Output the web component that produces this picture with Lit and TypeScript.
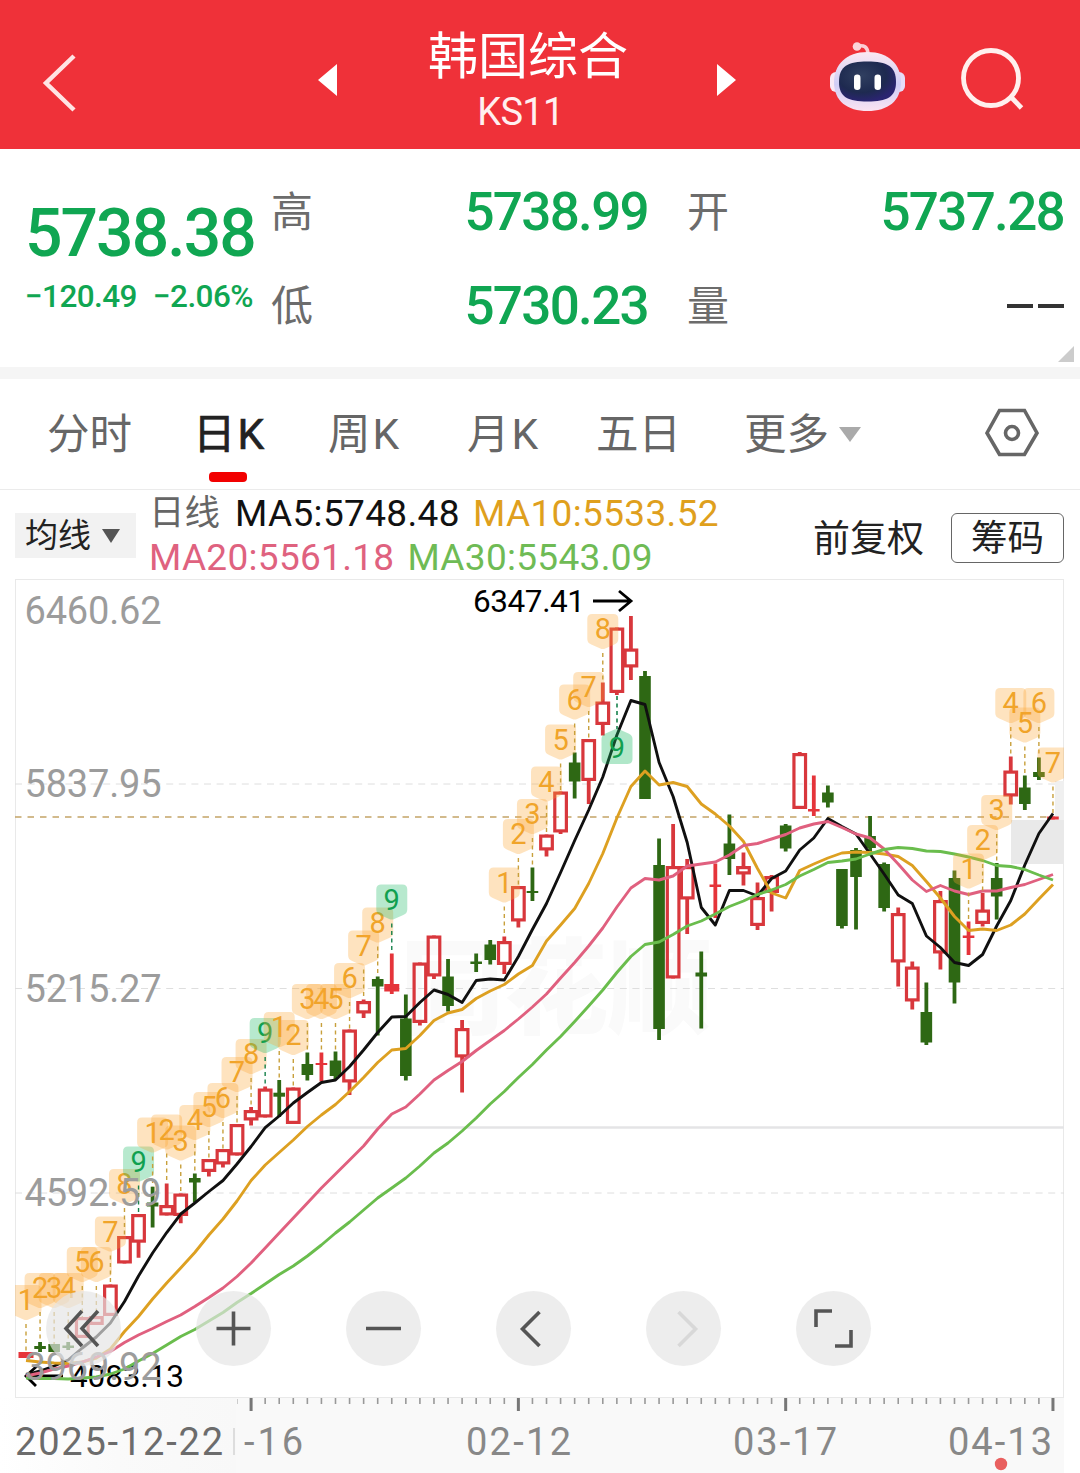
import { LitElement, html, svg, css } from "lit";
import { customElement } from "lit/decorators.js";

type Kind = "r" | "g" | "f";
type Candle = [Kind, number, number, number, number];

// kind (r hollow red, g solid green, f solid red), wick top, body top, body bottom, wick bottom
const CANDLES: Candle[] = [
  ["f", 1352, 1352, 1358, 1358], ["g", 1342, 1346, 1349, 1352], ["g", 1344, 1344, 1352, 1352], ["g", 1342, 1345.5, 1348, 1350],
  ["r", 1317, 1317, 1338, 1338], ["r", 1316, 1316, 1325, 1325], ["r", 1284.5, 1284.5, 1316, 1316], ["r", 1236, 1236, 1263.5, 1263.5],
  ["r", 1214, 1214, 1242.7, 1257.7], ["g", 1186.7, 1202.5, 1206.5, 1227.5], ["r", 1183.5, 1205, 1215.5, 1215.5], ["r", 1193.5, 1193.5, 1216, 1223.3],
  ["g", 1173.5, 1178, 1182.5, 1202], ["r", 1159, 1159, 1172, 1176.5], ["r", 1149, 1149, 1164.5, 1167.5], ["r", 1124, 1124, 1155.5, 1155.5],
  ["r", 1107, 1110, 1120.5, 1125.5], ["r", 1086.5, 1088.5, 1117.5, 1117.5], ["g", 1080, 1092.7, 1096.7, 1117], ["r", 1087.5, 1087.5, 1124, 1124],
  ["g", 1052.5, 1064, 1075, 1080.5], ["f", 1052.5, 1063, 1065, 1081.5], ["g", 1051.5, 1060.5, 1076, 1079], ["r", 1029.5, 1029.5, 1082.5, 1095],
  ["r", 999.5, 1001, 1013.5, 1018], ["g", 976.5, 979, 986.5, 1035.5], ["f", 953.5, 984, 991.5, 994], ["g", 994.5, 1018.5, 1076, 1080.5],
  ["r", 962.5, 962.5, 1023, 1025.5], ["r", 935.5, 935.5, 976.5, 979], ["g", 959, 976.5, 1006, 1011.5], ["r", 1020, 1028, 1057.5, 1092.5],
  ["g", 953.5, 961.5, 964, 972], ["g", 940, 944.5, 960, 964.5], ["r", 936.5, 941, 965, 974], ["r", 886, 886, 921.5, 927.5],
  ["g", 867.5, 891, 893, 901], ["r", 834.5, 834.5, 850.5, 856.5], ["r", 791.5, 791.5, 832.5, 834], ["g", 752.5, 762.5, 781.5, 798.5],
  ["r", 739, 739, 781, 804], ["r", 682.5, 701.5, 725, 735.5], ["r", 627.5, 627.5, 693, 695], ["r", 616, 648.5, 667.5, 680],
  ["g", 671, 676, 799, 799], ["g", 838.5, 865, 1029, 1040], ["r", 824, 866, 978.5, 978.5], ["r", 859, 866, 899.5, 934],
  ["g", 951.5, 972.5, 976.5, 1028.5], ["f", 863.5, 884.5, 887, 918], ["g", 814.5, 843.5, 859, 875], ["r", 852.5, 866, 874.5, 885.5],
  ["r", 882.5, 897, 926, 930], ["r", 875, 876, 893, 911.5], ["g", 824, 825.5, 848.5, 851.5], ["r", 752, 753, 809, 809],
  ["f", 775.5, 809, 811.5, 816], ["g", 785.5, 792.5, 802.5, 807.5], ["g", 869, 869, 926, 928.5], ["g", 848, 850, 877, 929.5],
  ["g", 816, 836, 848, 852], ["g", 862.5, 864, 908, 911.5], ["r", 907.5, 913, 962.5, 986.5], ["r", 961.5, 966.5, 1001.5, 1009.5],
  ["g", 982.5, 1012, 1042.5, 1045], ["r", 891, 900, 953.5, 969.5], ["g", 870.5, 878, 982.5, 1003.5], ["f", 921.5, 935.5, 938, 955],
  ["r", 893, 909.5, 924, 926.5], ["g", 863, 878, 896.5, 919.5], ["r", 756.5, 770.5, 796.5, 804.5], ["g", 775.5, 787.5, 804, 810],
  ["g", 757.5, 772, 777, 780], ["f", 816.5, 816.5, 819.5, 819.5],
];

// candle index, count, top edge of the tag
const TAGS: [number, number, number][] = [
  [0, 1, 1285], [1, 2, 1273], [2, 3, 1273], [3, 4, 1273], [4, 5, 1247], [5, 6, 1247], [6, 7, 1216.5], [7, 8, 1169], [8, 9, 1146.5],
  [9, 1, 1117.5], [10, 2, 1114.5], [11, 3, 1125.5], [12, 4, 1105], [13, 5, 1092], [14, 6, 1083], [15, 7, 1057], [16, 8, 1039], [17, 9, 1018],
  [18, 1, 1012], [19, 2, 1020], [20, 3, 984], [21, 4, 984], [22, 5, 984], [23, 6, 963], [24, 7, 930.5], [25, 8, 907.5], [26, 9, 884.5],
  [34, 1, 867.5], [35, 2, 819], [36, 3, 799], [37, 4, 766.5], [38, 5, 724.5], [39, 6, 684.5], [40, 7, 672], [41, 8, 614],
  [67, 1, 853.5], [68, 2, 825], [69, 3, 795], [70, 4, 688], [71, 5, 707.5], [72, 6, 688], [73, 7, 747.5],
];

const MA5 = [1375, 1371, 1366, 1360, 1348, 1337, 1323, 1301.5, 1276, 1253, 1232.5, 1214, 1203, 1191.5, 1180.5, 1164, 1146.5, 1127.7, 1116, 1103, 1092.5, 1082.5, 1080, 1066.5, 1050, 1032.5, 1017, 1016.5, 1002.5, 990, 994.5, 1002.5, 980.5, 979, 980, 956.5, 929.5, 903.5, 872.5, 840.5, 810, 777, 735, 700.5, 704.5, 762.5, 796.5, 842.5, 907.5, 925, 890.5, 890.5, 896, 878.5, 871, 850, 838, 818.5, 826.5, 834, 854, 874, 895, 903.5, 936, 947.5, 962.5, 965.5, 954.5, 926, 900.5, 865, 833.5, 813.5];
const MA10 = [1360.5, 1362, 1363, 1363.5, 1362, 1358, 1349, 1331.5, 1316.5, 1299, 1283, 1268, 1252.5, 1235, 1219, 1201, 1180.5, 1165, 1152.5, 1140, 1126.5, 1115, 1104.5, 1091.5, 1077.5, 1062.5, 1050, 1048.5, 1035.5, 1020.5, 1013, 1009.5, 998.5, 991, 984.5, 974, 965.5, 941, 925, 908.5, 883.5, 853.5, 818, 786.5, 771, 785, 782.5, 786.5, 804, 814, 826, 841.5, 868.5, 893, 898, 870.5, 864, 858, 853, 852, 852.5, 854, 856.5, 865.5, 881.5, 898, 916.5, 930.5, 929, 930.5, 925, 914, 899, 884.5];
const MA20 = [1376, 1373, 1369, 1366, 1362, 1357, 1351.5, 1342.5, 1335, 1328.5, 1321.5, 1315, 1306.5, 1297.5, 1288, 1276.5, 1263, 1248, 1233, 1218, 1203, 1188, 1174, 1160, 1146, 1129, 1114, 1107, 1094, 1080, 1070.5, 1061.5, 1050.5, 1040.5, 1030.5, 1019, 1007, 994, 978, 962.5, 946, 928, 907, 888, 878.5, 880, 876, 866, 864, 862, 855, 845.5, 843.5, 839, 834.5, 828, 824, 821.5, 827.5, 834, 838, 849, 864, 880, 891.5, 885.5, 891, 894.5, 891, 891, 887.5, 884.5, 879.5, 874.5];
const MA30 = [1378, 1378.5, 1378.5, 1379, 1378, 1377, 1374, 1369, 1361, 1353.5, 1345, 1336.5, 1329.5, 1321, 1312.5, 1302.5, 1293.5, 1284, 1274.5, 1266, 1256, 1245, 1233, 1222, 1210, 1198, 1188, 1178, 1166, 1153, 1143, 1131, 1118, 1104, 1091.5, 1077.5, 1064.5, 1050, 1036.5, 1021.5, 1006, 990, 972.5, 956.5, 944.5, 942, 934.5, 926, 921, 914, 906.5, 901, 894.5, 890, 884.5, 876, 869.5, 862.5, 861, 859, 854, 849.5, 847.5, 848.5, 851, 851.5, 854, 857, 860.5, 865.5, 866.5, 869.5, 875, 880];

const px = (i: number) => 26 + i * 14.068;
const path = (ys: number[]) => ys.map((y, i) => `${px(i).toFixed(1)},${y}`).join(" ");

@customElement("k-chart")
class KChart extends LitElement {
  static styles = css`
    :host { display: block; position: relative; height: 895px; }
    svg.plot { display: block; font-family: Roboto, "Noto Sans CJK SC", sans-serif; }
    .ylabel { fill: #9c9c9c; font-size: 38px; }
    .peak { fill: #000; font-size: 31.5px; }
    .xlabel { fill: #888; font-size: 38px; }
    .cursor { fill: #6c6c6c; }
    .tag { font-size: 29px; text-anchor: middle; fill: #f0a42a; }
    .tag.nine { fill: #10a050; }
    .mark { font: 900 104px "Noto Sans CJK SC", sans-serif; fill: #fafafa; }
    .tools { position: absolute; left: 46px; top: 713px; display: flex; gap: 75px; }
    .tool { width: 75px; height: 75px; border-radius: 50%; background: rgba(228, 228, 228, .68); }
    .tool svg { display: block; fill: none; stroke: #555; stroke-width: 3.6; }
    .tool.off svg { stroke: #d8d8d8; }
  `;

  private candle([k, wt, bt, bb, wb]: Candle, i: number) {
    const x = px(i);
    if (k === "r") {
      return svg`<g stroke="#d8373c" fill="none">
        <path d="M${x} ${wt}V${bt + 1}M${x} ${bb - 1}V${wb}" stroke-width="3.8"/>
        <rect x=${x - 5.8} y=${bt + 1.6} width="11.6" height=${bb - bt - 3.2} stroke-width="3.2"/></g>`;
    }
    const c = k === "g" ? "#2e6814" : "#e5343a";
    const w = k === "g" ? 11.6 : bb - bt > 5 ? 15 : 11.6;
    return svg`<g fill=${c}><rect x=${x - 1.9} y=${wt} width="3.8" height=${wb - wt}/>
      <rect x=${x - w / 2} y=${bt} width=${w} height=${bb - bt}/></g>`;
  }

  private tag([i, n, t]: [number, number, number]) {
    const x = px(i);
    const nine = n === 9;
    const end = CANDLES[i][1];
    return svg`
      <path d="M${x - 10.5} ${t}h21q5 0 5 5v20q0 4 -4 5.500l-9 4q-2.500 1 -5 0l-9 -4q-4 -1.500 -4 -5.500v-20q0 -5 5 -5z"
        fill=${nine ? "#18b862" : "#fba52f"} fill-opacity=".31"/>
      ${end > t + 39 ? svg`<path d="M${x} ${t + 39}V${end}" stroke=${nine ? "#17824c" : "#c8a03c"} stroke-width="1.4" stroke-dasharray="4 3.500"/>` : ""}
      <text class="tag ${nine ? "nine" : ""}" x=${x} y=${t + 25}>${n}</text>`;
  }

  private ticks() {
    const out = [];
    for (let i = 16; i < CANDLES.length; i++) {
      const major = (i - 16) % 19 === 0;
      out.push(svg`<path d="M${px(i)} 1398v${major ? 13 : 6}" stroke=${major ? "#777" : "#999"} stroke-width=${major ? 3 : 1.6}/>`);
    }
    return out;
  }

  render() {
    return html`
      <svg class="plot" width="1080" height="895" viewBox="0 578 1080 895">
        <defs>
          <clipPath id="box"><rect x="15" y="579" width="1049" height="819"/></clipPath>
          <linearGradient id="fade"><stop offset="0" stop-color="#fff"/><stop offset=".5" stop-color="#fafafa"/><stop offset="1" stop-color="#f8f8f8"/></linearGradient>
        </defs>
        <rect x="15" y="1397" width="1049" height="76" fill="#f9f9f9"/>
        <rect x="0" y="1398" width="236" height="75" fill="url(#fade)"/>
        <text class="mark" x="400" y="1026">同花顺</text>
        <rect x="15.500" y="579.500" width="1048" height="818" fill="none" stroke="#e9e9e9"/>
        <g stroke="#dedede" stroke-dasharray="7 5.600">
          <path d="M15 784H1064M15 988.500H1064M15 1193H1064"/>
        </g>
        <path d="M250 1127.500H1064" stroke="#e4e4e6" stroke-width="2.600"/>
        <rect x="1055" y="781" width="9" height="39" fill="#f0f0f0"/>
        <rect x="1011" y="820" width="53" height="44" fill="#e9e9e9"/>
        <path d="M15 817H1053" stroke="#c4a467" stroke-width="1.700" stroke-dasharray="6.500 6"/>
        <g clip-path="url(#box)">
          ${CANDLES.map((c, i) => this.candle(c, i))}
          <g fill="none" stroke="#000" stroke-width="2.800">
            <path d="M26 1376H63M37 1366L26 1376L36 1386"/>
          </g>
          <text class="peak" x="70" y="1387" textLength="114">4083.13</text>
          <g fill="none" stroke-width="2.900" stroke-linejoin="round">
            <polyline points=${path(MA5)} stroke="#101010"/>
            <polyline points=${path(MA10)} stroke="#dda021"/>
            <polyline points=${path(MA20)} stroke="#e0607f"/>
            <polyline points=${path(MA30)} stroke="#6abd4d"/>
          </g>
          ${TAGS.map((t) => this.tag(t))}
          <path d="M606.500 764q-5 0 -5 -5v-20q0 -4 4 -5.500l9 -4q2.500 -1 5 0l9 4q4 1.500 4 5.500v20q0 5 -5 5z" fill="#18b862" fill-opacity=".34"/>
          <path d="M617 696V729" stroke="#17824c" stroke-width="1.600" stroke-dasharray="4 3.500"/>
          <text class="tag nine" x="617" y="758">9</text>
        </g>
        <text class="peak" x="473" y="612" textLength="112">6347.41</text>
        <path d="M593 601H631M619 591L631 601L619 611" fill="none" stroke="#000" stroke-width="2.800"/>
        <text class="ylabel" x="24.500" y="624" textLength="137">6460.62</text>
        <text class="ylabel" x="24.500" y="797" textLength="137">5837.95</text>
        <text class="ylabel" x="24.500" y="1002" textLength="137">5215.27</text>
        <text class="ylabel" x="24.500" y="1206" textLength="137">4592.59</text>
        <text class="ylabel" x="24.500" y="1380" textLength="137">3969.92</text>
        ${this.ticks()}
        <path d="M237.500 1399v5" stroke="#ccc"/>
        <text class="xlabel cursor" x="15" y="1455" textLength="208">2025-12-22</text>
        <path d="M234 1428V1455" stroke="#ddd" stroke-width="2"/>
        <text class="xlabel" x="244" y="1455" textLength="59">-16</text>
        <text class="xlabel" x="466" y="1455" textLength="105">02-12</text>
        <text class="xlabel" x="733" y="1455" textLength="104">03-17</text>
        <text class="xlabel" x="948" y="1455" textLength="104">04-13</text>
        <circle cx="1001" cy="1464" r="6.200" fill="#e9605f"/>
      </svg>
      <div class="tools">
        <div class="tool"><svg width="75" height="75"><path d="M36 20L20 37.500L36 55M52 20L36 37.500L52 55"/></svg></div>
        <div class="tool"><svg width="75" height="75"><path d="M20.500 37.500H54.500M37.500 20.500V54.500"/></svg></div>
        <div class="tool"><svg width="75" height="75"><path d="M20 37.500H55"/></svg></div>
        <div class="tool"><svg width="75" height="75"><path d="M43.500 21L26.500 38L43.500 55"/></svg></div>
        <div class="tool off"><svg width="75" height="75"><path d="M32.500 21L49.500 38L32.500 55"/></svg></div>
        <div class="tool"><svg width="75" height="75"><path d="M20 36V20H36M55 39V55H39"/></svg></div>
      </div>`;
  }
}

@customElement("app-root")
class AppRoot extends LitElement {
  static styles = css`
    :host { display: block; width: 1080px; height: 1473px; overflow: hidden; background: #fff; font-family: Roboto, "Noto Sans CJK SC", sans-serif; }
    * { box-sizing: border-box; }
    .bar { height: 149px; background: #ef3139; display: grid; grid-template-columns: 300px 454px 326px; color: #fff; }
    .bar svg { display: block; }
    .mid { display: flex; justify-content: space-between; padding: 0 17px; }
    .mid > svg { margin-top: 63px; }
    .name { text-align: center; padding-top: 26px; margin-left: 2px; }
    .zh { font-size: 50px; line-height: 62px; font-weight: 400; }
    .code { font-size: 38px; line-height: 50px; margin-top: -1px; margin-right: 15px; letter-spacing: -.6px; color: #fff0f0; }
    .quote { height: 218px; display: grid; grid-template-columns: 271px 416px 393px; position: relative; color: #10a652; }
    .now { padding: 46px 0 0 25px; }
    .price { font-size: 66px; font-weight: 500; line-height: 78px; letter-spacing: -1.95px; }
    .chg { display: flex; font-size: 31.5px; line-height: 38px; padding-top: 5px; font-weight: 500; letter-spacing: -.6px; }
    .chg span:first-child { width: 128px; }
    .pair { display: flex; flex-direction: column; padding-top: 31px; }
    .cell { height: 93.500px; display: flex; justify-content: space-between; font-size: 53px; font-weight: 500; line-height: 64px; letter-spacing: -1.7px; padding-right: 39px; }
    .last .cell { padding-right: 16px; }
    .cell b { font-size: 42px; font-weight: 400; color: #6c6c6c; letter-spacing: 0; padding-top: 1px; }
    .none { display: flex; gap: 5px; padding-top: 30px; }
    .none i { width: 26px; height: 4.500px; background: #333; }
    .corner { position: absolute; right: 6px; bottom: 5px; border-left: 16px solid transparent; border-bottom: 16px solid #ccc; }
    .strip { height: 12px; background: #f5f5f5; }
    .tabs { height: 111px; border-bottom: 1px solid #ebebeb; display: flex; padding: 25px 40px 0 47px; font-size: 42.500px; line-height: 62px; color: #666; }
    .tab { width: 141px; flex: none; }
    .k { letter-spacing: 2px; }
    .tab.on { color: #222; -webkit-text-stroke: .7px #222; width: 134px; margin-left: 5px; margin-right: 1px; }
    .tab.on::after { content: ""; display: block; width: 38px; height: 10px; border-radius: 4px; background: #f20000; margin: 6px 0 0 16px; }
    .tab.c { width: 139px; }
    .tab.d { width: 129px; }
    .tab.e { width: 148px; }
    .tab.f { width: 241px; display: flex; align-items: center; height: 62px; gap: 10px; }
    .tabs > svg { margin-top: 4px; }
    .ma { height: 88px; display: flex; font-size: 37px; line-height: 43.500px; }
    .pick { margin: 23px 0 0 15px; width: 121px; height: 45px; background: #f2f2f2; font-size: 33px; line-height: 43px; padding-left: 10px; color: #222; display: flex; align-items: center; gap: 11px; }
    .vals { margin: 2px 0 0 13px; width: 641px; letter-spacing: .35px; }
    .vals div { display: flex; gap: 13px; height: 43.500px; white-space: nowrap; }
    .vals .label { font-size: 35.500px; color: #666; letter-spacing: 0; padding: 0 2px 0 0; }
    .vals .m20, .vals .m30 { letter-spacing: .3px; }
    .m5 { color: #111; } .m10 { color: #dfa01d; } .m20 { color: #df627f; } .m30 { color: #6fbb55; }
    .adj { margin: 26px 0 0 23px; font-size: 37px; line-height: 48px; color: #222; }
    .chip { margin: 23px 0 0 27px; width: 113px; height: 50px; border: 1.500px solid #666; border-radius: 6px; font-size: 36.500px; line-height: 50px; text-align: center; color: #222; }
  `;

  render() {
    return html`
      <div class="bar">
        <svg width="120" height="149"><path d="M74 56L46 83L74 110" fill="none" stroke="#ffe4e4" stroke-width="4.500"/></svg>
        <div class="mid">
          <svg width="22" height="34"><path d="M20 1V33L1 17z" fill="#fff"/></svg>
          <div class="name"><div class="zh">韩国综合</div><div class="code">KS11</div></div>
          <svg width="22" height="34"><path d="M2 1V33L21 17z" fill="#fff"/></svg>
        </div>
        <svg width="326" height="149" viewBox="754 0 326 149">
          <defs>
            <linearGradient id="shell" x2="0" y2="1"><stop offset="0" stop-color="#fbe8f2"/><stop offset=".55" stop-color="#cfcdf6"/><stop offset="1" stop-color="#fbe3f2"/></linearGradient>
            <radialGradient id="face" cx=".4" cy=".35" r=".65"><stop offset="0" stop-color="#303f60"/><stop offset=".65" stop-color="#1e2a50"/><stop offset="1" stop-color="#2a2470"/></radialGradient>
          </defs>
          <path d="M858 46q9 -2 10 7" fill="none" stroke="#fbcdd4" stroke-width="3.500"/>
          <circle cx="857" cy="46.500" r="4.300" fill="#fbd5da"/>
          <rect x="830" y="72" width="12" height="20" rx="6" fill="#f8e9f6"/><rect x="893" y="72" width="12" height="20" rx="6" fill="#e6dcf8"/>
          <path d="M867.500 52C889 52 901 65 901 82C901 101 888 111 867.500 111C847 111 834 101 834 82C834 65 846 52 867.500 52z" fill="url(#shell)"/>
          <path d="M867.500 61.500C887 61.500 896 66 896 82C896 97 887 101.500 867.500 101.500C848 101.500 839 97 839 82C839 66 848 61.500 867.500 61.500z" fill="url(#face)"/>
          <rect x="854" y="74.500" width="6.500" height="15.500" rx="3.200" fill="#fff"/><rect x="874.500" y="74.500" width="6.500" height="15.500" rx="3.200" fill="#fff"/>
          <g fill="none" stroke="#fff0ee" stroke-width="4.800"><circle cx="991" cy="78" r="27.500"/><path d="M1010.500 96.500L1021.500 108"/></g>
        </svg>
      </div>
      <div class="quote">
        <div class="now"><div class="price">5738.38</div><div class="chg"><span>−120.49</span><span>−2.06%</span></div></div>
        <div class="pair">
          <div class="cell"><b>高</b><span>5738.99</span></div>
          <div class="cell"><b>低</b><span>5730.23</span></div>
        </div>
        <div class="pair last">
          <div class="cell"><b>开</b><span>5737.28</span></div>
          <div class="cell"><b>量</b><span class="none"><i></i><i></i></span></div>
        </div>
        <div class="corner"></div>
      </div>
      <div class="strip"></div>
      <div class="tabs">
        <div class="tab">分时</div><div class="tab on k">日K</div><div class="tab c k">周K</div><div class="tab d k">月K</div><div class="tab e">五日</div>
        <div class="tab f">更多<svg width="22" height="16"><path d="M0 0H22L11 15z" fill="#aaa"/></svg></div>
        <svg width="54" height="50"><path d="M14.500 2.500H39.500L52 25L39.500 46.500H14.500L2 25z" fill="none" stroke="#666" stroke-width="3.600"/><circle cx="27" cy="25" r="6.500" fill="none" stroke="#666" stroke-width="3.600"/></svg>
      </div>
      <div class="ma">
        <div class="pick">均线<svg width="18" height="14"><path d="M0 0H18L9 14z" fill="#555"/></svg></div>
        <div class="vals">
          <div><span class="label">日线</span><span class="m5">MA5:5748.48</span><span class="m10">MA10:5533.52</span></div>
          <div><span class="m20">MA20:5561.18</span><span class="m30">MA30:5543.09</span></div>
        </div>
        <div class="adj">前复权</div>
        <div class="chip">筹码</div>
      </div>
      <k-chart></k-chart>`;
  }
}
